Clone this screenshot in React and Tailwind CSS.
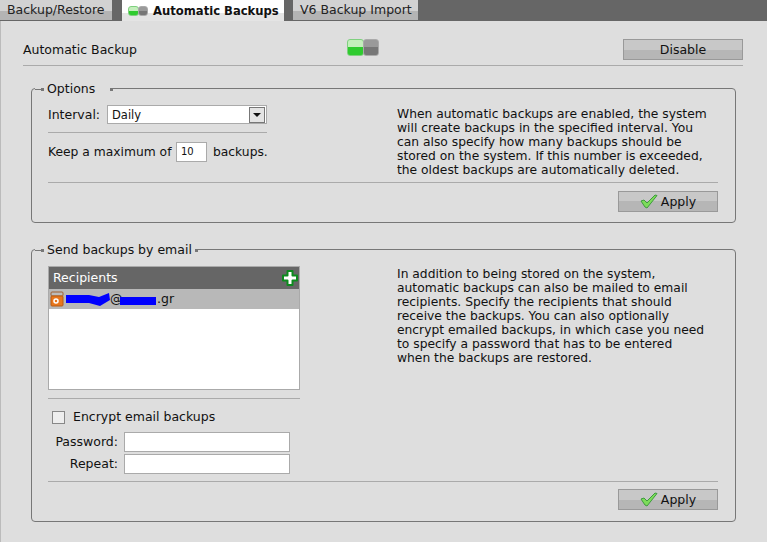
const font = { fontFamily: '"DejaVu Sans", Verdana, sans-serif' };

const Toggle = ({ small }) => (
  <div className="flex">
    <div className={`${small ? "w-[11px] h-[10px]" : "w-[17px] h-[17px]"} rounded-[3px] bg-[linear-gradient(#c4efbc_0_45%,#2fcb2f_45%)] border border-[#7fd07f]`} />
    <div className={`${small ? "w-[10px] h-[10px]" : "w-[16px] h-[17px]"} rounded-[3px] bg-[linear-gradient(#9a9a9a_0_45%,#777_45%)] border border-[#aaa] -ml-px`} />
  </div>
);

const Check = () => (
  <svg width="18" height="15" viewBox="0 0 18 15">
    <path d="M1 7 L4 6 L7 9 L15 1 L17 1.5 L7 14 L5 13 Z" fill="#7ddc5a" stroke="#3f9b3f" strokeWidth="1" strokeLinejoin="round" />
  </svg>
);

const ApplyButton = () => (
  <button className="flex items-center justify-center gap-[3px] w-[100px] h-[21px] border border-[#999] bg-[linear-gradient(#c8c8c8_0_50%,#b6b6b6_50%)] text-[#111]">
    <Check />
    Apply
  </button>
);

const Legend = ({ label, width }) => (
  <div className={`absolute -top-[10px] left-[3px] h-[20px] flex items-center bg-[#dedede] ${width}`}>
    <span className="w-[6px] h-px bg-[#777]" />
    <span className="w-[3px] h-[3px] bg-[#777] mr-[3px]" />
    <span className="whitespace-nowrap text-[#111]">{label}</span>
    <span className="w-[3px] h-[3px] bg-[#777] ml-auto" />
  </div>
);

const Tab = ({ children, className }) => (
  <div className={`h-[20px] flex items-center pl-[7px] bg-[linear-gradient(#d2d2d2_0_55%,#b4b4b4_55%)] text-[#222] ${className}`}>
    {children}
  </div>
);

const App = () => {
  return (
    <div style={font} className="w-[767px] h-[542px] overflow-hidden bg-[#dedede] text-[12.5px] leading-[14px] text-[#111]">
      <div className="flex h-[21px] bg-[#666]">
        <Tab className="w-[112px]">Backup/Restore</Tab>
        <div className="ml-[10px] w-[162px] h-[21px] bg-[linear-gradient(#fff_0_60%,#e4e4e4_60%)] flex items-center pl-[6px] gap-[5px] font-bold text-[11.6px] whitespace-nowrap text-[#111] z-10">
          <Toggle small />
          <span>Automatic Backups</span>
        </div>
        <Tab className="ml-[9px] w-[125px]">V6 Backup Import</Tab>
      </div>

      <div className="border-l border-[#bbb] h-[521px] pl-[22px] pt-[18px]">
        <div className="w-[720px] h-[27px] flex items-start border-b border-[#aaa]">
          <span className="w-[324px] pt-[4px]">Automatic Backup</span>
          <Toggle />
          <button className="ml-auto w-[120px] h-[21px] border border-[#999] bg-[linear-gradient(#c8c8c8_0_50%,#b6b6b6_50%)] text-[#111]">
            Disable
          </button>
        </div>

        <div className="relative ml-[8px] mt-[22px] w-[705px] h-[135px] border border-[#777] rounded-[4px] pl-[16px] pr-[16px] pt-[16px]">
          <Legend label="Options" width="w-[78px]" />
          <div className="flex h-[77px]">
            <div className="w-[219px] shrink-0">
              <div className="flex items-center h-[19px]">
                <span className="w-[59px]">Interval:</span>
                <div className="flex-1 h-[19px] bg-white border border-[#aaa] flex items-center pl-[4px] justify-between text-[11.5px]">
                  Daily
                  <span className="w-[16px] h-[16px] mr-px border border-[#777] bg-[#e4e4e4] flex items-center justify-center">
                    <span className="w-0 h-0 border-x-[4px] border-x-transparent border-t-[4px] border-t-[#111]" />
                  </span>
                </div>
              </div>
              <div className="h-px bg-[#aaa] mt-[8px] mb-[9px]" />
              <div className="flex items-center whitespace-nowrap text-[12.3px]">
                <span className="w-[128px] shrink-0">Keep a maximum of</span>
                <div className="w-[31px] h-[20px] shrink-0 bg-white border border-[#aaa] flex items-center pl-[4px] text-[10px]">10</div>
                <span className="ml-[6px] shrink-0">backups.</span>
              </div>
            </div>
            <p className="ml-[130px] w-[311px] mt-[2px] text-[12.3px]">
              When automatic backups are enabled, the system will create backups in the specified interval. You can also specify how many backups should be stored on the system. If this number is exceeded, the oldest backups are automatically deleted.
            </p>
          </div>
          <div className="h-px bg-[#aaa] w-[670px]" />
          <div className="flex justify-end w-[670px] mt-[8px]">
            <ApplyButton />
          </div>
        </div>

        <div className="relative ml-[8px] mt-[26px] w-[705px] h-[273px] border border-[#777] rounded-[4px] pl-[16px] pr-[16px] pt-[16px]">
          <Legend label="Send backups by email" width="w-[163px]" />
          <div className="flex h-[215px]">
            <div className="w-[252px] shrink-0">
              <div className="h-[124px] border border-[#aaa] bg-white">
                <div className="h-[22px] bg-[#666] text-white flex items-center justify-between pl-[4px] pr-px">
                  Recipients
                  <svg width="16" height="16" viewBox="0 0 16 16">
                    <path d="M5.5 1 H10.5 V5.5 H15 V10.5 H10.5 V15 H5.5 V10.5 H1 V5.5 H5.5 Z" fill="#fff" stroke="#0d8a1e" strokeWidth="2" strokeLinejoin="round" />
                  </svg>
                </div>
                <div className="relative h-[20px] bg-[#b8b8b8] flex items-center pl-px">
                  <svg width="14" height="16" viewBox="0 0 14 16">
                    <rect x="1" y="1" width="12" height="4" rx="1" fill="#bbb" stroke="#a06030" />
                    <rect x="1" y="5" width="12" height="10" rx="1" fill="#e8761c" stroke="#b85a10" />
                    <circle cx="6" cy="10" r="2" fill="none" stroke="#fff" strokeWidth="1.5" />
                  </svg>
                  <span className="ml-[46px] w-[47px]">@</span>
                  <span>.gr</span>
                  <svg className="absolute left-[16px] top-[2px]" width="92" height="16" viewBox="0 0 92 16">
                    <path d="M1 4 H24 L34 6 L44 2 L45 9 L35 15 L24 12 H1 Z M55 6 H91 V14 H55 Z" fill="#0000ff" />
                  </svg>
                </div>
              </div>
              <div className="h-px bg-[#aaa] mt-[8px]" />
              <label className="flex items-center h-[18px] mt-[9px] pl-[4px]">
                <span className="w-[13px] h-[13px] border border-[#888] bg-[#eee]" />
                <span className="ml-[8px]">Encrypt email backups</span>
              </label>
              <div className="grid grid-cols-[67px_166px] gap-x-[6px] gap-y-[2px] mt-[6px] pl-[3px] items-center whitespace-nowrap">
                <span className="text-right">Password:</span>
                <div className="h-[20px] bg-white border border-[#aaa]" />
                <span className="text-right">Repeat:</span>
                <div className="h-[20px] bg-white border border-[#aaa]" />
              </div>
            </div>
            <p className="ml-[97px] w-[311px] pt-[1px] text-[12.3px]">
              In addition to being stored on the system, automatic backups can also be mailed to email recipients. Specify the recipients that should receive the backups. You can also optionally encrypt emailed backups, in which case you need to specify a password that has to be entered when the backups are restored.
            </p>
          </div>
          <div className="h-px bg-[#aaa] w-[670px]" />
          <div className="flex justify-end w-[670px] mt-[7px]">
            <ApplyButton />
          </div>
        </div>
      </div>
    </div>
  );
};

export default App;
